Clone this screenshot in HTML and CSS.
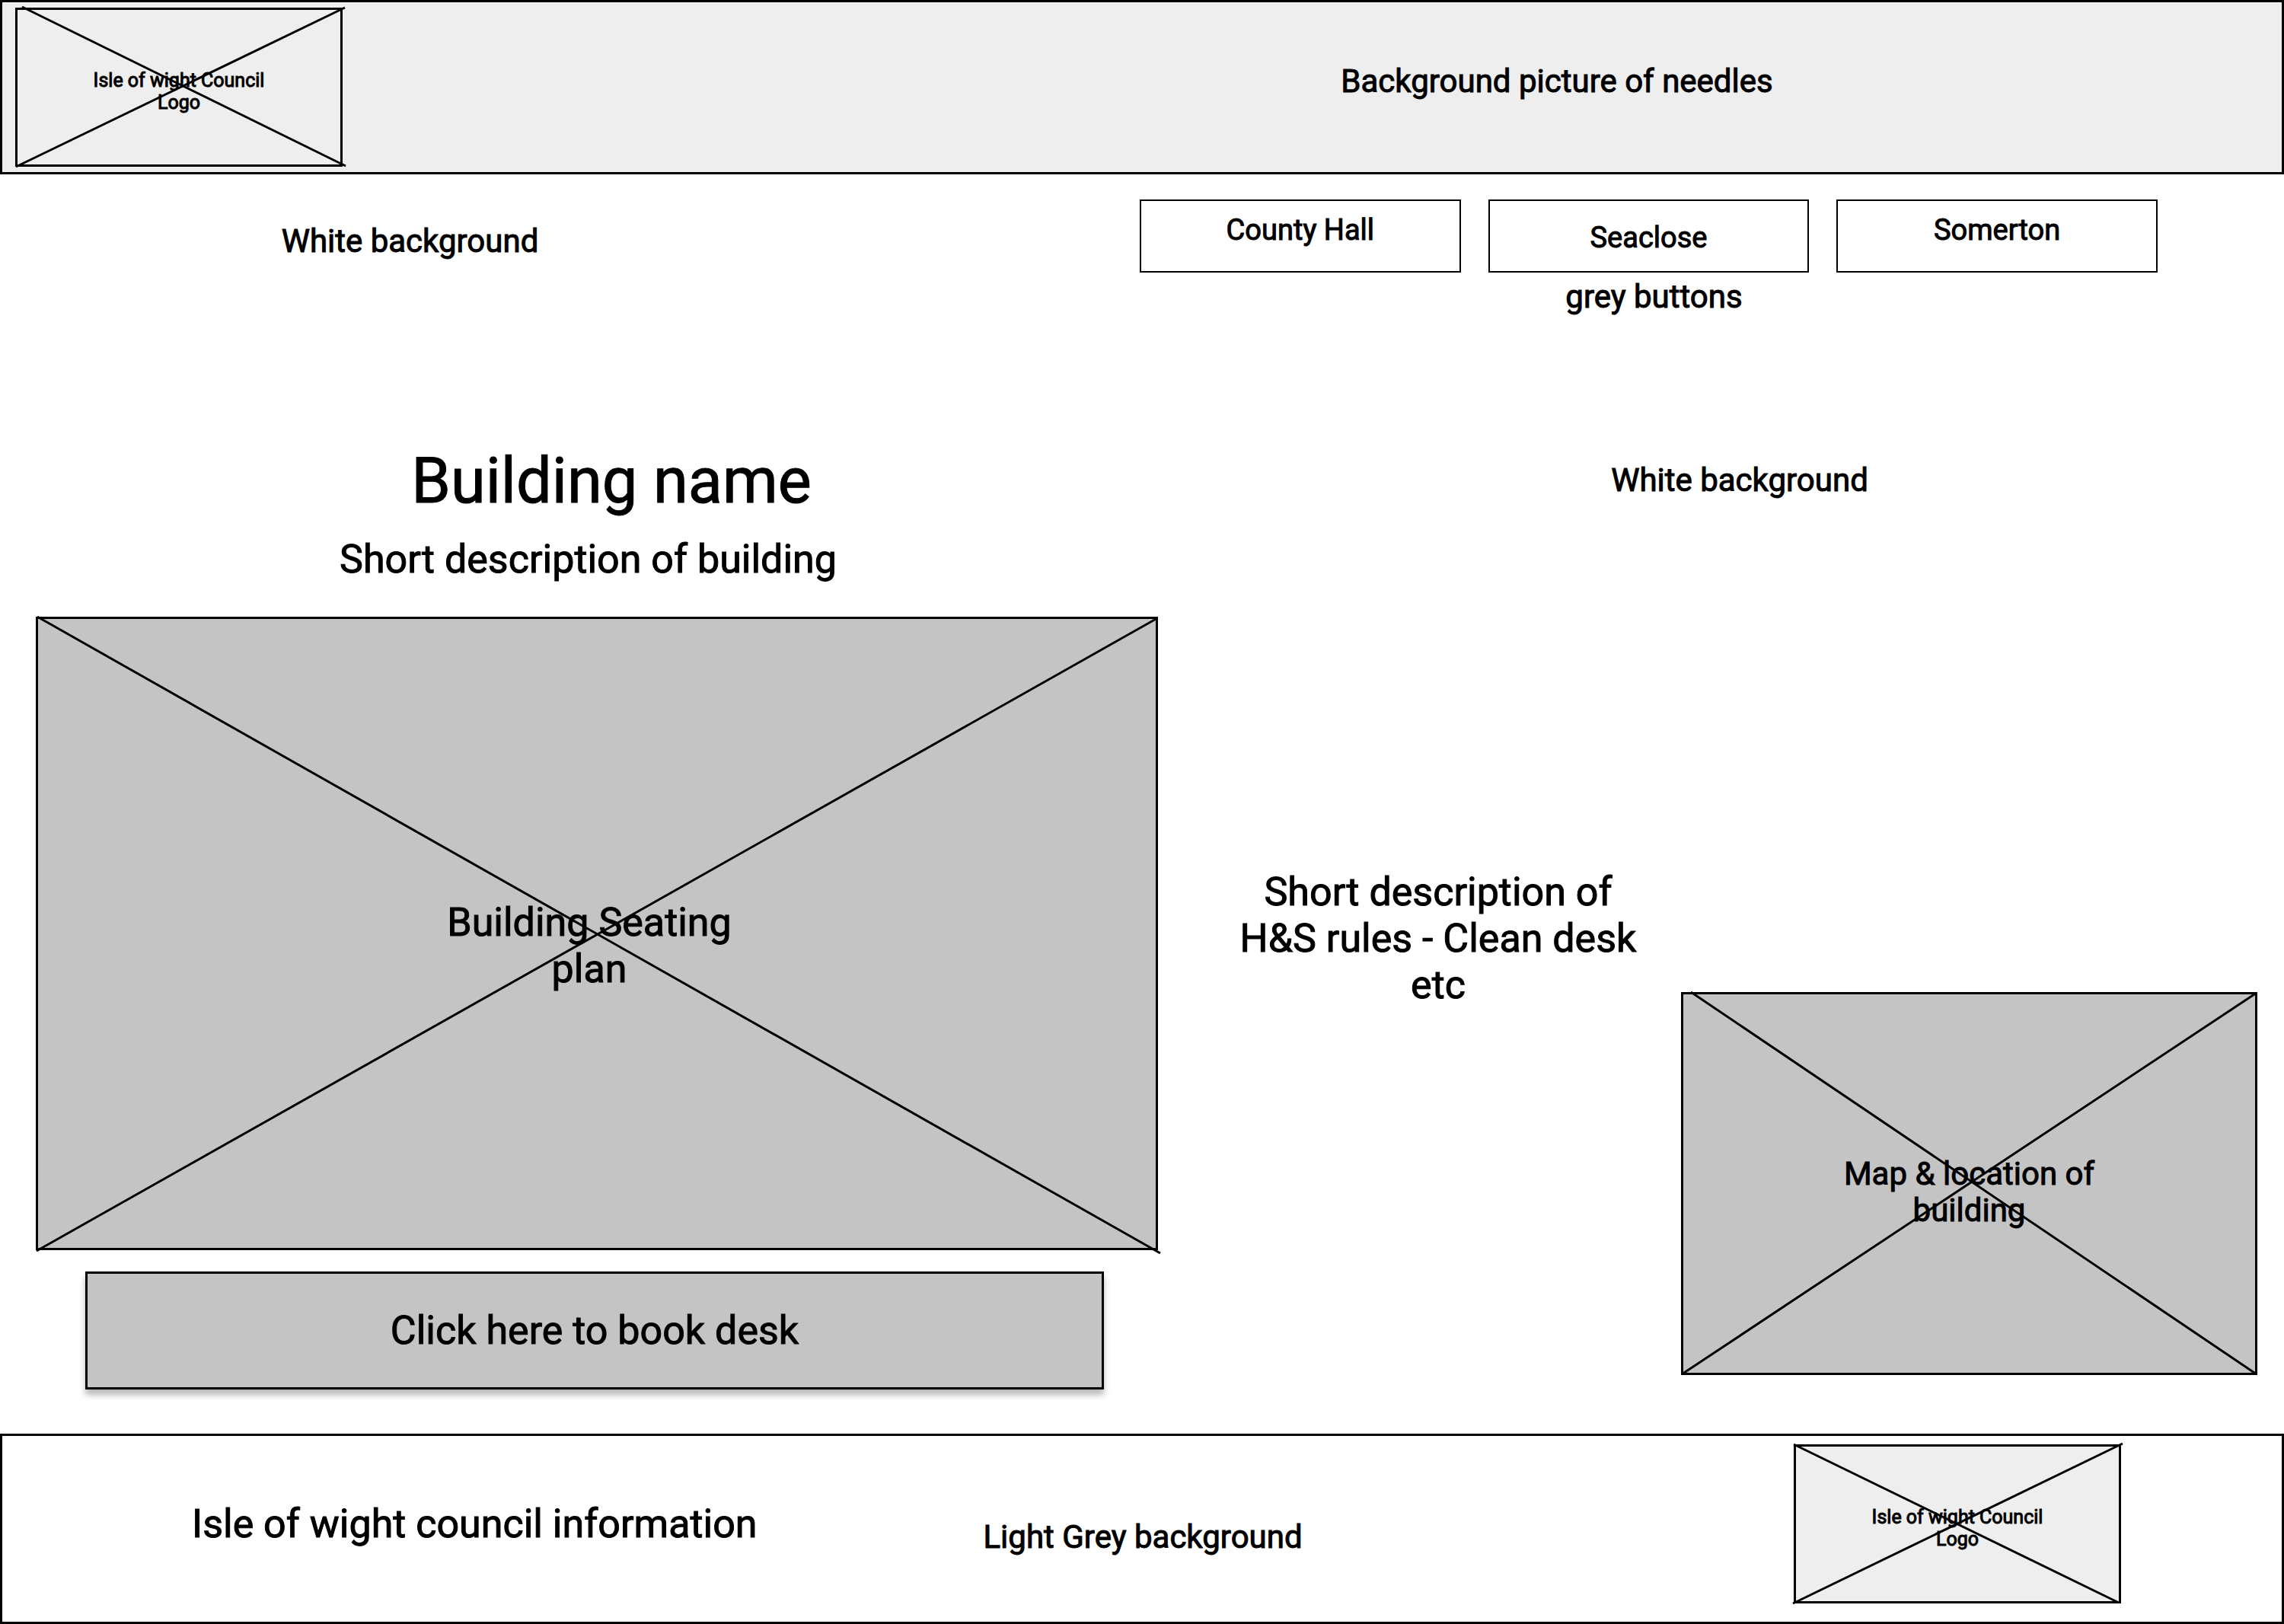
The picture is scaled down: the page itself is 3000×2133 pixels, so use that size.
FILE: index.html
```html
<!DOCTYPE html>
<html lang="en">
<head>
  <meta charset="utf-8">
  <meta name="viewport" content="width=device-width, initial-scale=1">
  <title>Desk booking</title>
  <link rel="stylesheet" href="styles.css">
</head>
<body>
  <header class="banner">
    <div class="placeholder logo">
      <svg class="cross" viewBox="0 0 430 209" preserveAspectRatio="none" aria-hidden="true">
        <path d="M9 -1L434 208M1 209L433 0"/>
      </svg>
      <p class="caption small">Isle of wight Council<br>Logo</p>
    </div>
    <p class="banner-note body">Background picture of needles</p>
  </header>

  <section class="toolbar">
    <p class="toolbar-note body">White background</p>
    <div class="sites">
      <nav class="site-buttons" aria-label="Buildings">
        <button type="button" class="site">County Hall</button>
        <button type="button" class="site site-middle">Seaclose</button>
        <button type="button" class="site">Somerton</button>
      </nav>
      <p class="sites-note body">grey buttons</p>
    </div>
  </section>

  <main class="content">
    <section class="building">
      <h1 class="title">Building name</h1>
      <p class="lead summary">Short description of building</p>
      <div class="placeholder plan">
        <svg class="cross" viewBox="0 0 1474 832" preserveAspectRatio="none" aria-hidden="true">
          <path d="M2 0L1477 836M1 833L1473 2"/>
        </svg>
        <p class="caption lead">Building Seating<br>plan</p>
      </div>
      <button type="button" class="book lead">Click here to book desk</button>
    </section>
    <section class="details">
      <p class="details-note body">White background</p>
      <div class="details-row">
        <p class="rules lead">Short description of<br>H&amp;S rules - Clean desk<br>etc</p>
        <div class="placeholder map">
          <svg class="cross" viewBox="0 0 757 503" preserveAspectRatio="none" aria-hidden="true">
            <path d="M13 0L756 502M1 502L756 1"/>
          </svg>
          <p class="caption body">Map &amp; location of<br>building</p>
        </div>
      </div>
    </section>
  </main>

  <footer class="footer">
    <p class="footer-info lead">Isle of wight council information</p>
    <p class="footer-note body">Light Grey background</p>
    <div class="placeholder logo">
      <svg class="cross" viewBox="0 0 430 209" preserveAspectRatio="none" aria-hidden="true">
        <path d="M0 0L427 208M-1 209L432 -1"/>
      </svg>
      <p class="caption small">Isle of wight Council<br>Logo</p>
    </div>
  </footer>
</body>
</html>
```
FILE: styles.css
```css
* {
  box-sizing: border-box;
}

body {
  margin: 0;
  background: #fff;
  color: #000;
  font-family: Roboto, "Liberation Sans", sans-serif;
  -webkit-text-stroke: 1px #000;
}

h1,
p {
  margin: 0;
  font-weight: 400;
}

button {
  font-family: inherit;
  color: inherit;
  cursor: pointer;
}

/* Type scale */
.small {
  font-size: 25px;
  line-height: 29px;
}

.body {
  font-size: 42px;
  line-height: 48px;
}

.lead {
  font-size: 52px;
  line-height: 61px;
}

.title {
  font-size: 83px;
  line-height: 98px;
}

/* Crossed boxes that stand in for pictures */
.placeholder {
  position: relative;
  display: flex;
  align-items: center;
  justify-content: center;
  border: 3px solid #000;
  background: #c4c4c4;
  text-align: center;
}

.cross {
  position: absolute;
  inset: -3px;
  width: calc(100% + 6px);
  height: calc(100% + 6px);
  overflow: visible;
  fill: none;
  stroke: #000;
  stroke-width: 3px;
}

.logo {
  flex: none;
  width: 430px;
  height: 209px;
  padding-top: 10px;
  background: #eee;
}

/* Header */
.banner {
  display: flex;
  align-items: flex-start;
  height: 229px;
  padding: 7px 17px;
  border: 3px solid #000;
  background: #eee;
}

.banner-note {
  flex: 1;
  padding: 73px 532px 0 1192px;
  text-align: center;
  white-space: nowrap;
}

.toolbar {
  display: grid;
  grid-template-columns: 1077fr 1757fr;
  padding: 33px 166px 0 0;
  align-items: start;
}

.toolbar-note {
  padding-top: 31px;
  text-align: center;
}

.sites {
  padding-left: 420px;
}

.site-buttons {
  display: grid;
  grid-template-columns: repeat(3, 1fr);
  gap: 36px;
}

.site {
  height: 96px;
  padding: 0 0 16px;
  border: 2px solid #000;
  background: #fff;
  font-size: 38px;
  line-height: 46px;
}

.site-middle {
  padding: 4px 0 0;
}

.sites-note {
  margin-top: 8px;
  padding-left: 14px;
  text-align: center;
}

/* Main area */
.content {
  display: grid;
  grid-template-columns: 1474fr 1444fr;
  padding: 169px 35px 58px 47px;
}

.building {
  display: flex;
  flex-direction: column;
  text-align: center;
}

.building .title {
  padding-left: 38px;
}

.summary {
  margin: 23px 0 45px;
  padding-right: 23px;
}

.plan {
  height: 832px;
  padding: 32px 20px 0 0;
}

.book {
  height: 155px;
  margin: 28px 71px 0 65px;
  border: 3px solid #000;
  background: #c4c4c4;
  box-shadow: 0 7px 8px rgba(0, 0, 0, 0.28);
}

.details {
  display: flex;
  flex-direction: column;
}

.details-note {
  padding: 24px 0 0 84px;
  text-align: center;
}

.details-row {
  flex: 1;
  display: grid;
  grid-template-columns: 687fr 757fr;
}

.rules {
  padding: 486px 0 0 49px;
  text-align: center;
}

.map {
  align-self: end;
  height: 503px;
  margin-bottom: 19px;
  padding-top: 22px;
}

/* Footer */
.footer {
  display: flex;
  align-items: flex-start;
  height: 250px;
  padding: 11px 211px 11px 249px;
  border: 3px solid #000;
}

.footer-info {
  padding-top: 74px;
}

.footer-note {
  flex: 1;
  padding: 98px 0 0 297px;
}
```
